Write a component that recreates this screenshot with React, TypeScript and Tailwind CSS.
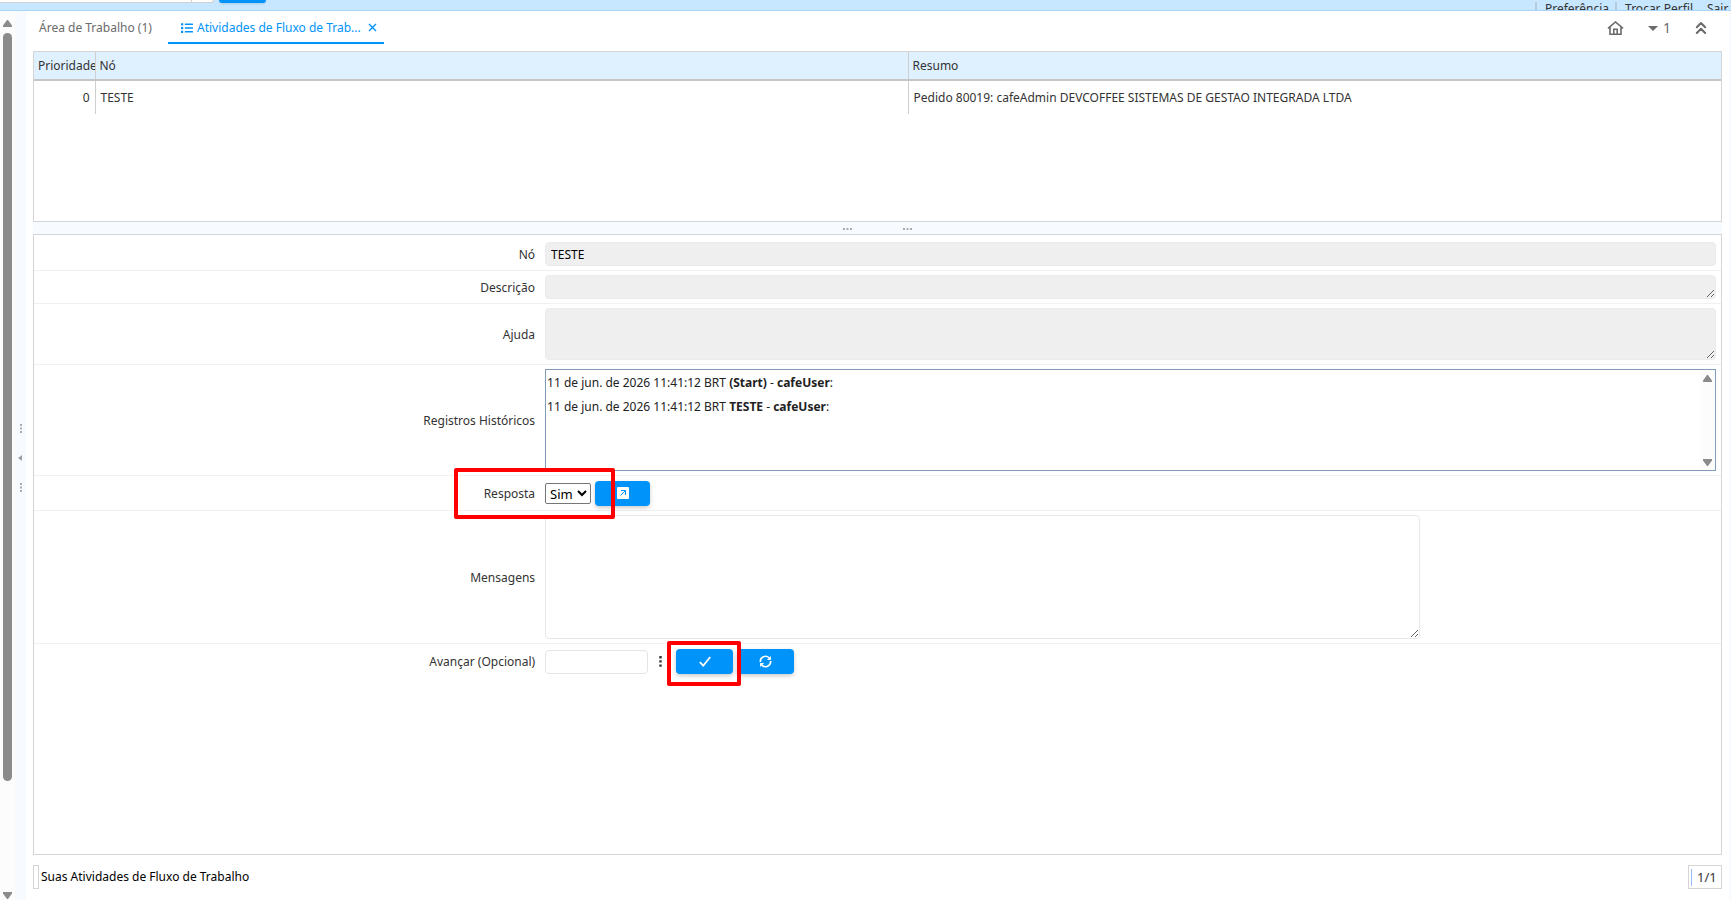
import { useState } from "react";
import type { ReactNode } from "react";
import { ChevronsUp } from "lucide-react";
import { FaList } from "react-icons/fa";

const activities = [
  {
    priority: 0,
    node: "TESTE",
    summary: "Pedido 80019: cafeAdmin DEVCOFFEE SISTEMAS DE GESTAO INTEGRADA LTDA",
  },
];

const history = [
  { date: "11 de jun. de 2026 11:41:12 BRT", node: "(Start)", user: "cafeUser" },
  { date: "11 de jun. de 2026 11:41:12 BRT", node: "TESTE", user: "cafeUser" },
];

const buttonClass =
  "flex h-[25px] shrink-0 items-center justify-center rounded bg-[#0093f9] text-white shadow-[0_2px_4px_rgba(0,0,0,0.2)]";

interface FormRowProps {
  label: string;
  htmlFor?: string;
  className?: string;
  last?: boolean;
  children: ReactNode;
}

function FormRow({ label, htmlFor, className = "", last, children }: FormRowProps) {
  return (
    <div className={`grid grid-cols-[30%_1fr] items-center ${last ? "" : "border-b border-[#f0f0f0]"} ${className}`}>
      <label htmlFor={htmlFor} className="px-[5px] pt-px text-right text-[#333]">
        {label}
      </label>
      <div className="relative flex min-w-0 items-center px-[5px]">{children}</div>
    </div>
  );
}

function Arrow({ down }: { down?: boolean }) {
  return (
    <svg width="9" height="7" viewBox="0 0 9 7" className={down ? "rotate-180" : ""}>
      <path d="M4 0h1l4 5.500v1.500H0V5.500z" fill="#8b8b8b" />
    </svg>
  );
}

function Dots({ vertical }: { vertical?: boolean }) {
  return (
    <svg width="9" height="9" viewBox="0 0 9 9" className={vertical ? "rotate-90" : ""}>
      <path d="M0 3h2v2H0zM3.500 3h2v2h-2zM7 3h2v2H7z" fill="#a9adb3" />
    </svg>
  );
}

function TopBar() {
  const links = ["Preferência", "Trocar Perfil", "Sair"];

  return (
    <header className="flex h-[11px] shrink-0 items-start justify-between overflow-hidden border-b border-[#a9d5fb] bg-[#c6e7ff]">
      <div className="flex items-start gap-[5px]">
        <div className="flex h-[3px] w-[214px] rounded-br border-r border-b border-[#d0d0d0] bg-white">
          <div className="ml-auto w-[22px] border-l border-[#d0d0d0]" />
        </div>
        <button type="button" aria-label="Novo" className="h-[3px] w-[47px] rounded-b bg-[#0093f9] shadow" />
      </div>
      <nav className="flex items-start pt-px text-[12px] leading-4 text-[#333]">
        {links.map((link) => (
          <a key={link} href="#" className="flex items-start last:w-[32px]">
            <span className="mt-px h-3 w-[2px] bg-[#b5cbdc]" />
            <span className="pr-[6px] pl-2">{link}</span>
          </a>
        ))}
      </nav>
    </header>
  );
}

function WestSplitter() {
  return (
    <aside className="flex shrink-0">
      <div className="flex w-[15px] flex-col items-center bg-[#fcfcfc] pt-[9px]">
        <Arrow />
        <div className="mt-[6px] mb-[111px] w-[9px] flex-1 rounded-full bg-[#8b8b8b]" />
        <Arrow down />
        <div className="h-px" />
      </div>
      <div className="flex w-[11px] flex-col items-center gap-[22px] bg-[#f7fbff] pt-[413px]">
        <Dots vertical />
        <svg width="5" height="6" viewBox="0 0 5 6">
          <path d="M0 3l4-3v6z" fill="#9aa0a6" />
        </svg>
        <Dots vertical />
      </div>
    </aside>
  );
}

function Tabs() {
  return (
    <div className="flex h-10 shrink-0 items-start justify-between pr-[11px]">
      <div className="flex">
        <button type="button" className="h-[33px] w-[135px] pl-[6px] text-left whitespace-nowrap text-[#6b6b6b]">
          Área de Trabalho (1)
        </button>
        <div className="flex h-[33px] w-[216px] items-center border-b-2 border-[#0093f9] pt-[2px] pl-[13px] text-[#0093f9]">
          <FaList size={12} className="mr-1 shrink-0" />
          <button type="button" className="w-[167px] truncate text-left">
            Atividades de Fluxo de Trab...
          </button>
          <button type="button" aria-label="Fechar" className="ml-1">
            <svg width="9" height="9" viewBox="0 0 9 9" stroke="currentColor" strokeWidth="1.400">
              <path d="M1 1l7 7M8 1L1 8" />
            </svg>
          </button>
        </div>
      </div>
      <div className="flex h-[34px] items-center text-[14px] text-[#6b6b6b]">
        <button type="button" aria-label="Início">
          <svg width="17" height="14" viewBox="0 0 17 14" fill="none" stroke="currentColor" strokeWidth="1.600">
            <path d="M1 7.300L8.500 1 16 7.300M3 6v7.200h11V6M6.800 13V8.200h3.400V13" />
          </svg>
        </button>
        <button type="button" className="ml-6 flex items-center gap-[5px]">
          <svg width="10" height="5" viewBox="0 0 10 5">
            <path d="M0 0h10L5 5z" fill="currentColor" />
          </svg>
          1
        </button>
        <button type="button" aria-label="Recolher" className="ml-5">
          <ChevronsUp size={20} strokeWidth={2.500} />
        </button>
      </div>
    </div>
  );
}

function ActivityTable() {
  return (
    <div className="h-[171px] shrink-0 border border-[#d5d5d5] text-[#333]">
      <table className="w-full table-fixed border-collapse text-left">
        <colgroup>
          <col className="w-[61px]" />
          <col />
          <col />
        </colgroup>
        <thead>
          <tr className="h-7 border-b-2 border-[#c6c6c6] bg-[#dff1ff]">
            <th className="overflow-hidden border-r border-[#cfcfcf] pt-px pl-1 font-normal whitespace-nowrap">Prioridade</th>
            <th className="border-r border-[#cfcfcf] pt-px pl-1 font-normal">Nó</th>
            <th className="pt-px pl-1 font-normal">Resumo</th>
          </tr>
        </thead>
        <tbody>
          {activities.map((item) => (
            <tr key={item.summary} className="h-[34px]">
              <td className="border-r border-[#cfcfcf] pt-px pr-[5px] text-right">{item.priority}</td>
              <td className="border-r border-[#cfcfcf] pt-px pl-[5px]">{item.node}</td>
              <td className="pt-px pl-[5px]">{item.summary}</td>
            </tr>
          ))}
        </tbody>
      </table>
    </div>
  );
}

function ActivityForm() {
  const [answer, setAnswer] = useState("Sim");
  const [message, setMessage] = useState("");
  const [forward, setForward] = useState("");

  return (
    <form className="min-h-0 flex-1 border border-[#d5d5d5]" onSubmit={(event) => event.preventDefault()}>
      <FormRow label="Nó" htmlFor="node" className="h-9 pt-[3px]">
        <input
          id="node"
          readOnly
          value="TESTE"
          className="h-6 w-full rounded border border-[#ebebeb] bg-[#efefef] px-[5px] text-black outline-none"
        />
      </FormRow>
      <FormRow label="Descrição" htmlFor="description" className="h-[33px]">
        <textarea id="description" readOnly className="block h-6 w-full rounded border border-[#ebebeb] bg-[#efefef]" />
      </FormRow>
      <FormRow label="Ajuda" htmlFor="help" className="h-[61px]">
        <textarea id="help" readOnly className="block h-[52px] w-full rounded border border-[#ebebeb] bg-[#efefef]" />
      </FormRow>
      <FormRow label="Registros Históricos" className="h-[111px]">
        <div className="flex h-[102px] w-full justify-between border border-[#7f9db9]">
          <div className="pt-px pl-px text-[#222]">
            {history.map((item) => (
              <p key={item.node} className="leading-6">
                {item.date} <b>{item.node}</b> - <b>{item.user}</b>:
              </p>
            ))}
          </div>
          <div className="flex w-[15px] flex-col items-center justify-between bg-[#fcfcfc] pt-[5px] pb-1">
            <Arrow />
            <Arrow down />
          </div>
        </div>
      </FormRow>
      <FormRow label="Resposta" htmlFor="answer" className="h-[35px]">
        <select
          id="answer"
          value={answer}
          onChange={(event) => setAnswer(event.target.value)}
          className="h-[21px] w-[46px] appearance-auto rounded-xs border border-[#767676] bg-white text-[13px] text-black"
        >
          <option>Sim</option>
          <option>Não</option>
        </select>
        <button type="button" aria-label="Abrir" className={`ml-1 w-[55px] ${buttonClass}`}>
          <svg width="12" height="12" viewBox="0 0 12 12">
            <rect width="12" height="12" rx="1" fill="#fff" />
            <path d="M3.500 8.500l5-5M4 3.500h4.500V8" fill="none" stroke="#0093f9" strokeWidth="1" />
          </svg>
        </button>
        <span className="pointer-events-none absolute -top-[13px] -left-[86px] z-10 h-[51px] w-[161px] rounded-xs border-4 border-[#fe0000]" />
      </FormRow>
      <FormRow label="Mensagens" htmlFor="message" className="h-[133px]">
        <textarea
          id="message"
          value={message}
          onChange={(event) => setMessage(event.target.value)}
          className="block h-[124px] w-[74.7%] rounded border border-[#e8e8e8] bg-white"
        />
      </FormRow>
      <FormRow label="Avançar (Opcional)" htmlFor="forward" last className="h-[35px]">
        <input
          id="forward"
          value={forward}
          onChange={(event) => setForward(event.target.value)}
          className="h-6 w-[103px] rounded border border-[#e4e4e4] bg-white px-1 outline-none"
        />
        <button type="button" aria-label="Pesquisar" className="flex w-[28px] pl-[11px]">
          <svg width="3" height="11" viewBox="0 0 3 11" fill="#333">
            <path d="M.3 0h2.400v2.400H.3zM.3 4.200h2.400v2.400H.3zM.3 8.400h2.400v2.400H.3z" />
          </svg>
        </button>
        <div className="relative">
          <button type="submit" aria-label="Confirmar" className={`w-[57px] ${buttonClass}`}>
            <svg width="12" height="11" viewBox="0 0 12 11" fill="none" stroke="currentColor" strokeWidth="1.800">
              <path d="M.8 6l3.400 3.700L11.200 1" />
            </svg>
          </button>
          <span className="pointer-events-none absolute -top-2 -left-[9px] z-10 h-[45px] w-[74px] rounded-xs border-4 border-[#fe0000]" />
        </div>
        <button type="button" aria-label="Atualizar" className={`ml-1 w-[57px] ${buttonClass}`}>
          <svg width="13" height="13" viewBox="0 0 14 14" fill="none" stroke="currentColor" strokeWidth="1.800">
            <path d="M1.500 7.500A5.500 5.500 0 0 1 11 3.200M12.500 6.500A5.500 5.500 0 0 1 3 10.800" />
            <path d="M12.800 1v4.300H8.500zM1.200 13V8.700h4.300z" fill="currentColor" stroke="none" />
          </svg>
        </button>
      </FormRow>
    </form>
  );
}

export default function App() {
  return (
    <div className="flex h-screen flex-col overflow-hidden bg-white font-['Noto_Sans','Open_Sans',sans-serif] text-[12px] leading-4">
      <TopBar />
      <div className="flex min-h-0 flex-1">
        <WestSplitter />
        <main className="flex min-w-0 flex-1 flex-col px-[7px]">
          <Tabs />
          <ActivityTable />
          <div className="flex h-3 shrink-0 items-center justify-center gap-[51px] bg-[#f7fbff] pt-[2px]">
            <Dots />
            <Dots />
          </div>
          <ActivityForm />
          <footer className="flex h-[45px] shrink-0 items-start justify-between pt-[10px] text-black">
            <div className="flex items-center gap-[2px]">
              <span className="h-6 w-[6px] border border-[#d5d5d5]" />
              Suas Atividades de Fluxo de Trabalho
            </div>
            <div className="flex h-6 w-[34px] items-center gap-[5px] border border-[#d5d5d5] pl-[2px] text-[13px] text-[#333]">
              <span className="h-[17px] w-px bg-[#9dbdf5]" />
              1/1
            </div>
          </footer>
        </main>
        <div className="w-[2px] shrink-0 bg-[#f7fbff]" />
      </div>
    </div>
  );
}
